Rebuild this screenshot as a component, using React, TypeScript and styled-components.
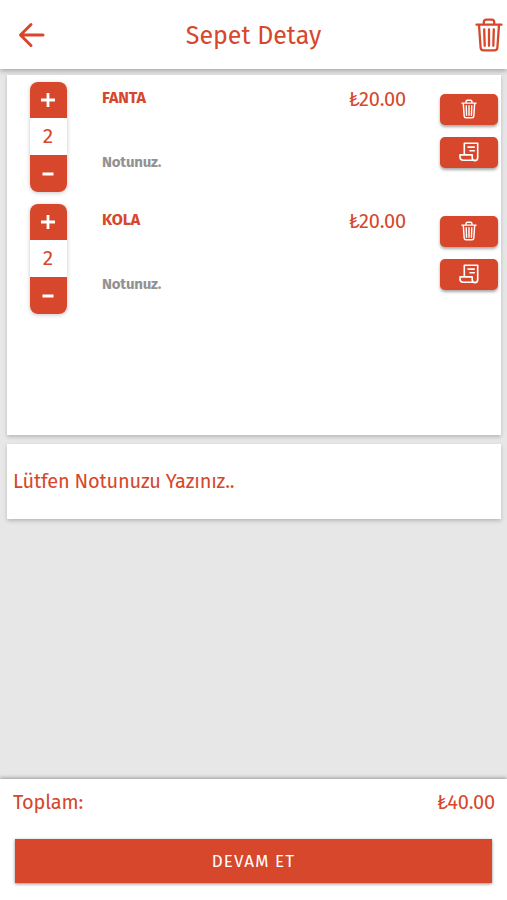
import React from "react";
import styled, { createGlobalStyle } from "styled-components";

const RED = "#d6472b";

const GlobalStyle = createGlobalStyle`
  * { box-sizing: border-box; }
  body { margin: 0; background: #e7e7e7; }
  button { border: 0; padding: 0; margin: 0; font: inherit; cursor: pointer; }
`;

const Screen = styled.div`
  display: flex;
  flex-direction: column;
  width: 100%;
  height: 900px;
  overflow: hidden;
  background: #e7e7e7;
  color: ${RED};
  font-family: "Fira Sans", "Noto Sans", sans-serif;
`;

const Header = styled.header`
  display: grid;
  grid-template-columns: 60px 1fr 60px;
  align-items: center;
  height: 69px;
  flex: none;
  background: #fff;
  box-shadow: 0 2px 5px rgba(0, 0, 0, 0.28);
`;

const IconButton = styled.button<{ $end?: boolean }>`
  display: flex;
  justify-content: ${(p) => (p.$end ? "flex-end" : "flex-start")};
  padding: ${(p) => (p.$end ? "1px 4px 0 0" : "1px 0 0 18px")};
  background: none;
  color: ${RED};
`;

const Title = styled.h1`
  margin: 0;
  padding-top: 3px;
  text-align: center;
  font-size: 25px;
  font-weight: 400;
  line-height: 34px;
`;

const Main = styled.main`
  display: flex;
  flex-direction: column;
  gap: 9px;
  flex: 1;
  padding: 6px 6px 0 7px;
`;

const Card = styled.section`
  background: #fff;
  box-shadow: 0 2px 4px rgba(0, 0, 0, 0.2);
`;

const ItemsCard = styled(Card)`
  display: flex;
  flex-direction: column;
  gap: 12px;
  height: 360px;
  padding: 7px 3px 0 23px;
`;

const NoteCard = styled(Card)`
  display: flex;
  align-items: center;
  height: 75px;
  padding: 0 0 1px 6px;
`;

const NoteText = styled.span`
  font-size: 20px;
  line-height: 26px;
  letter-spacing: -0.2px;
`;

const Row = styled.article`
  display: grid;
  grid-template-columns: 37px 1fr 62px 58px;
  height: 110px;
`;

const Stepper = styled.div`
  display: grid;
  grid-template-rows: 36px 37px 37px;
  overflow: hidden;
  border-radius: 8px;
  background: #fff;
  box-shadow: 0 1px 4px rgba(0, 0, 0, 0.22);
`;

const StepButton = styled.button`
  display: flex;
  align-items: center;
  justify-content: center;
  padding-right: 1px;
  background: ${RED};
  color: #fff;
`;

const Quantity = styled.span`
  padding-right: 1px;
  text-align: center;
  font-size: 21px;
  line-height: 37px;
`;

const Details = styled.div`
  display: flex;
  flex-direction: column;
  gap: 44px;
  padding: 6px 0 0 35px;
`;

const Name = styled.span`
  font-size: 16px;
  font-weight: 700;
  line-height: 20px;
  letter-spacing: -0.1px;
`;

const ItemNote = styled.span`
  color: #929292;
  font-size: 15px;
  font-weight: 700;
  line-height: 20px;
  letter-spacing: -0.2px;
`;

const Price = styled.span`
  justify-self: end;
  margin-right: 34px;
  white-space: nowrap;
  font-size: 20px;
  line-height: 34px;
  letter-spacing: -0.2px;
`;

const Actions = styled.div`
  display: flex;
  flex-direction: column;
  gap: 12px;
  padding-top: 12px;
`;

const ActionButton = styled.button`
  display: flex;
  align-items: center;
  justify-content: center;
  height: 31px;
  padding-bottom: 1px;
  border-radius: 5px;
  background: ${RED};
  color: #fff;
  box-shadow: 0 2px 3px rgba(0, 0, 0, 0.35);
`;

const Footer = styled.footer`
  flex: none;
  height: 121px;
  padding: 8px 15px 0;
  background: #fff;
  box-shadow: 0 -1px 4px rgba(0, 0, 0, 0.35);
`;

const TotalLine = styled.div`
  display: flex;
  justify-content: space-between;
  margin: 0 -3px 0 -2px;
  font-size: 20px;
  line-height: 30px;
  letter-spacing: -0.2px;
`;

const Continue = styled.button`
  display: block;
  width: 100%;
  height: 44px;
  margin-top: 22px;
  padding-top: 1px;
  background: ${RED};
  color: #fff;
  font-size: 17px;
  line-height: 43px;
  letter-spacing: 1.1px;
  box-shadow: 0 1px 3px rgba(0, 0, 0, 0.45);
`;

const BackIcon = () => (
  <svg width="27" height="26" viewBox="0 0 27 26" fill="none" stroke="currentColor" strokeWidth="3" strokeLinecap="round" strokeLinejoin="round">
    <path d="M13 2.5 2.5 13 13 23.5M3 13h22" />
  </svg>
);

const TrashIcon = ({ width, height, stroke }: { width: number; height: number; stroke: number }) => (
  <svg width={width} height={height} viewBox="0 0 28 34" fill="none" stroke="currentColor" strokeWidth={stroke} strokeLinecap="round" strokeLinejoin="round">
    <path d="M1.5 6.7h25M4 7l1.6 22.5q.2 2.8 3 2.8h10.8q2.8 0 3-2.8L24 7M8.8 6.5V4.2q0-2.5 2.5-2.5h5.4q2.5 0 2.5 2.5v2.3M9.2 11.3l.5 16.5M14 11.3v16.5M18.8 11.3l-.5 16.5" />
  </svg>
);

const ReceiptIcon = () => (
  <svg width="20" height="20" viewBox="0 0 20 20" fill="none" stroke="currentColor" strokeWidth="1.6" strokeLinecap="round" strokeLinejoin="round">
    <path d="M5.3 12.4V1.2h13.4v14.2q0 3.2-2.8 3.2-2.7 0-2.7-3.1v-2.6H1v2.2q0 3.2 3.2 3.2h11.7M9 5.1h6.3M11 8.7h4.3" />
  </svg>
);

const StepIcon = ({ plus }: { plus?: boolean }) => (
  <svg width="16" height="16" viewBox="0 0 16 16" fill="none" stroke="currentColor" strokeWidth="2.8">
    <path d={plus ? "M1 8h14M8 1v14" : "M2.5 8h11"} />
  </svg>
);

const items = [
  { name: "FANTA", quantity: 2, price: "₺20.00" },
  { name: "KOLA", quantity: 2, price: "₺20.00" },
];

export default function App() {
  return (
    <Screen>
      <GlobalStyle />
      <Header>
        <IconButton aria-label="Geri"><BackIcon /></IconButton>
        <Title>Sepet Detay</Title>
        <IconButton $end aria-label="Sepeti boşalt"><TrashIcon width={28} height={34} stroke={2.3} /></IconButton>
      </Header>
      <Main>
        <ItemsCard>
          {items.map((item) => (
            <Row key={item.name}>
              <Stepper>
                <StepButton aria-label="Artır"><StepIcon plus /></StepButton>
                <Quantity>{item.quantity}</Quantity>
                <StepButton aria-label="Azalt"><StepIcon /></StepButton>
              </Stepper>
              <Details>
                <Name>{item.name}</Name>
                <ItemNote>Notunuz.</ItemNote>
              </Details>
              <Price>{item.price}</Price>
              <Actions>
                <ActionButton aria-label="Sil"><TrashIcon width={16} height={20} stroke={2.5} /></ActionButton>
                <ActionButton aria-label="Not ekle"><ReceiptIcon /></ActionButton>
              </Actions>
            </Row>
          ))}
        </ItemsCard>
        <NoteCard><NoteText>Lütfen Notunuzu Yazınız..</NoteText></NoteCard>
      </Main>
      <Footer>
        <TotalLine>
          <span>Toplam:</span>
          <span>₺40.00</span>
        </TotalLine>
        <Continue>DEVAM ET</Continue>
      </Footer>
    </Screen>
  );
}
